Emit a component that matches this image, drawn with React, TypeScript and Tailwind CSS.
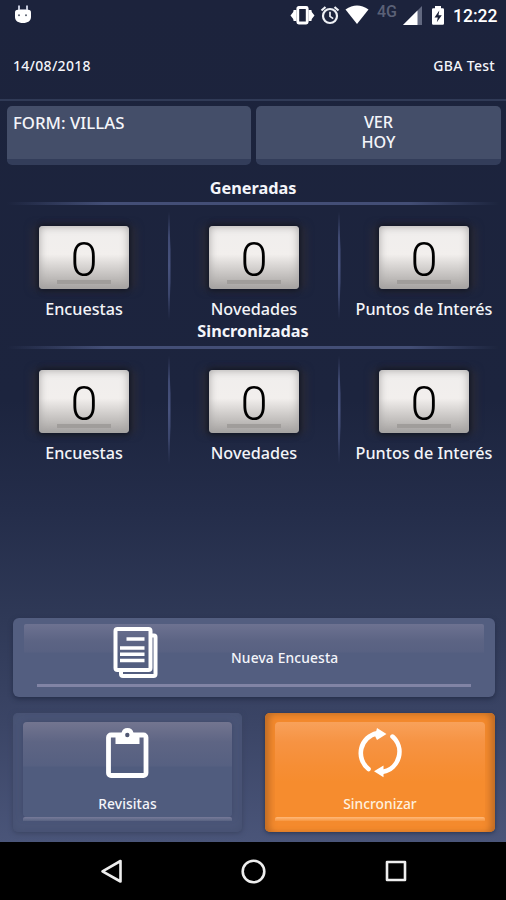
import React from "react";

function StatusBar() {
  return (
    <header className="flex h-8 shrink-0 items-start justify-between pl-[14px] pr-[9px]">
      <svg className="mt-[5px]" width="18" height="19" viewBox="0 0 18 19">
        <path d="M4 0.5h2v4h6v-4h2v5h-10z" fill="#c3c8da" />
        <path d="M1 8a3 3 0 0 1 3-3.2h10A3 3 0 0 1 17 8v4c0 3.7-3 6-8 6s-8-2.3-8-6z" fill="#fff" />
        <circle cx="5" cy="10.3" r="1" fill="#59606f" />
        <circle cx="12" cy="10.3" r="1" fill="#59606f" />
      </svg>
      <div className="flex items-start">
        <svg className="mt-[5px]" width="25" height="20" viewBox="0 0 25 20">
          <path d="M0.5 10.5 4 6v9zM24.500 10.500 21 6v9z" fill="#fff" />
          <path d="M5 5v11M20 5v11" stroke="#fff" strokeWidth="3" />
          <rect x="7.800" y="2.500" width="9.400" height="15.500" rx="1" fill="#1b2138" stroke="#fff" strokeWidth="2.800" />
        </svg>
        <svg className="ml-[5px] mt-[5px]" width="20" height="20" viewBox="0 0 20 20" fill="none" stroke="#eef0f5" strokeWidth="2.2">
          <circle cx="10" cy="11" r="7" />
          <path d="M1.500 5.500 5.500 2M18.500 5.500 14.500 2" />
          <path d="M10 6.800V11.400L13.200 13.600" strokeWidth="1.700" />
        </svg>
        <svg className="ml-[5px] mt-[5px]" width="24" height="20" viewBox="0 0 24 20">
          <path d="M0.500 4.500Q12-3.500 23.500 4.500L12 19z" fill="#fff" />
        </svg>
        <span className="ml-[8px] mt-[2px] w-[22px] font-['Roboto',sans-serif] text-[16px] font-medium leading-[20px] text-[#5b6177]">4G</span>
        <svg className="ml-[4px] mt-[6px]" width="20" height="20" viewBox="0 0 20 20">
          <path d="M19 0v19H0z" fill="#626980" />
          <path d="M14.500 4.500V19H0z" fill="#fff" />
        </svg>
        <svg className="ml-[8px] mt-[6px]" width="14" height="19" viewBox="0 0 14 19">
          <path d="M4 0h6v2.300h1.800q1.200 0 1.200 1.200v14q0 1.300-1.200 1.300H2.200Q1 18.800 1 17.500v-14q0-1.200 1.200-1.200H4z" fill="#fff" />
          <path d="M8.300 4.500 3.500 11.500h3.300L5.800 16.300l5-7H7.500z" fill="#1b2138" />
        </svg>
        <span className="ml-[8px] mt-[5px] w-[44px] whitespace-nowrap font-['Roboto',sans-serif] text-[17.500px] font-medium leading-[22px] text-white">12:22</span>
      </div>
    </header>
  );
}

function Rule() {
  return (
    <div className="mx-[7px] h-[3px] bg-linear-to-r from-[#2a345300] from-0% via-[#434e76] via-20% to-[#434e76] to-80%">
      <div className="ml-auto h-[3px] w-[90px] bg-linear-to-r from-[#434e76] to-[#1c243d]" />
    </div>
  );
}

function Counter({ label }: { label: string }) {
  return (
    <div className="flex w-[170px] flex-col items-center pt-[14px]">
      <div className="flex h-[63px] w-[90px] items-center justify-center rounded-[4px] bg-linear-to-b from-[#f0eeed] via-[#f2efed] via-45% to-[#a7a4a2] shadow-[0_0_5px_2px_#101626,6px_0_8px_0px_#302e38,-6px_0_8px_0px_#302e38,inset_0_0_9px_0px_#a5a3a3]">
        <div className="relative flex h-full w-[54px] items-center justify-center">
          <span className="absolute inset-x-0 bottom-[5px] h-[4px] bg-[#a09d9b]" />
          <span className="relative top-[2px] font-['Roboto',sans-serif] text-[49px] font-light leading-[63px] text-black">0</span>
        </div>
      </div>
      <span className="mt-[9px] whitespace-nowrap font-['Noto_Sans',sans-serif] text-[16.200px] font-medium leading-[22px] text-[#f3f4f8]">{label}</span>
    </div>
  );
}

function Divider() {
  return <div className="-mx-[1.500px] h-[108px] w-[3px] shrink-0 bg-linear-to-b from-[#39436a] via-[#48537e] to-[#303a5d] [clip-path:polygon(50%_0,100%_35%,100%_65%,50%_100%,0_65%,0_35%)]" />;
}

function Counters() {
  return (
    <div className="-ml-px flex h-[117px] w-[511px] pt-[7px]">
      <Counter label="Encuestas" />
      <Divider />
      <Counter label="Novedades" />
      <Divider />
      <Counter label="Puntos de Interés" />
    </div>
  );
}

export default function App() {
  return (
    <main className="flex h-[900px] w-[506px] flex-col overflow-hidden bg-black font-['Noto_Sans',sans-serif] text-[#f4f5fa]">
      <div className="flex h-[842px] shrink-0 flex-col bg-[linear-gradient(to_bottom,#1c233c_0px,#1c243e_400px,#242d4a_510px,#2f3957_620px,#3b4566_725px,#4a5579_842px)]">
        <StatusBar />
        <div className="flex h-[67px] shrink-0 items-center justify-between pl-[13px] pr-[11px] text-[14px] font-medium leading-5 tracking-[0.300px]">
          <span>14/08/2018</span>
          <span>GBA Test</span>
        </div>
        <div className="h-[2px] shrink-0 bg-[#303a56]" />
        <div className="flex shrink-0 gap-[5px] pl-[7px] pr-[5px] pt-[5px]">
          <button className="flex h-[59px] w-[244px] shrink-0 rounded-[5px] border-b-[6px] border-[#333d5a] bg-[#444e69] pl-[6px] pt-[7px] text-left text-[16.800px] font-medium leading-5">FORM: VILLAS</button>
          <button className="flex h-[59px] w-[245px] shrink-0 justify-center rounded-[5px] border-b-[6px] border-[#333d5a] bg-[#444e69] pt-[7px] text-center text-[16.200px] font-medium leading-[19.500px]">
            <span>VER<br />HOY</span>
          </button>
        </div>
        <section className="flex flex-col pt-[11px]">
          <h2 className="h-[26px] text-center text-[16.300px] font-bold leading-6">Generadas</h2>
          <Rule />
          <Counters />
        </section>
        <section className="flex flex-col">
          <h2 className="h-[24px] text-center text-[16.300px] font-bold leading-[19px]">Sincronizadas</h2>
          <Rule />
          <Counters />
        </section>
        <button className="ml-[13px] mr-[11px] mt-auto flex h-[79px] shrink-0 flex-col rounded-[6px] bg-[#535e80] pt-[6px] shadow-[0_2px_5px_#252e49]">
          <div className="mx-[11px] flex h-[59px] items-start self-stretch rounded-[2px] bg-[linear-gradient(to_bottom,#6d7291_0,#5c6484_17px,#586182_28px,#535e80_29px)]">
            <svg className="ml-[89px] mt-[3px]" width="45" height="52" viewBox="0 0 45 52" fill="none" stroke="#fff">
              <rect x="2.500" y="2" width="35" height="41" rx="2" strokeWidth="4" />
              <path d="M37.500 8.500h3.500q1.500 0 1.500 1.500v37q0 2-2 2H10q-2 0-2-2v-4" strokeWidth="4" />
              <path d="M13.500 12h18M7 21H31.500M7 27.300H31.500M7 33.500H31.500" strokeWidth="3.600" />
            </svg>
            <span className="ml-[73px] mt-[24px] text-[13.800px] font-medium leading-5 tracking-[0.150px]">Nueva Encuesta</span>
          </div>
          <span className="mx-6 mt-[1px] h-[3px] self-stretch bg-[#8184a5]" />
        </button>
        <div className="mb-[10px] mt-4 flex h-[119px] shrink-0 justify-between pl-[13px] pr-[11px]">
          <button className="flex w-[229px] flex-col rounded-[5px] bg-[#4b5678] px-[10px] pt-[9px] shadow-[0_1px_5px_#39435f,inset_0_0_8px_1px_#465071]">
            <div className="flex h-[95px] flex-col items-center self-stretch rounded-[4px] bg-[linear-gradient(to_bottom,#737590_0,#5e6584_20px,#566081_44px,#505c7e_45px)] shadow-[0_0_6px_#3e4868]">
              <svg className="mt-[5px]" width="43" height="52" viewBox="0 0 43 52">
                <rect x="2.500" y="8" width="37.500" height="40.500" rx="2.500" fill="none" stroke="#fff" strokeWidth="4.800" />
                <path d="M9.500 17V6h6q1-5 6-5t6 5h6v11z" fill="#fff" />
                <circle cx="21.300" cy="8" r="2.200" fill="#515872" />
              </svg>
              <span className="mt-[15px] text-[13.800px] font-medium leading-5 tracking-[0.100px]">Revisitas</span>
            </div>
            <span className="h-[4px] self-stretch rounded-t-[2px] bg-linear-to-b from-[#777a99] to-[#596382]" />
          </button>
          <button className="flex w-[230px] flex-col rounded-[5px] bg-[#f48a2d] px-[10px] pt-[9px] shadow-[0_1px_4px_#27334e,inset_7px_0_7px_-3px_#bd6b25,inset_-7px_0_7px_-3px_#bd6b25,inset_0_4px_7px_-2px_#d87c2a]">
            <div className="flex h-[95px] flex-col items-center self-stretch rounded-[4px] bg-[linear-gradient(to_bottom,#f8a15a_0,#f69343_20px,#f68e35_44px,#f68c2e_60px)]">
              <svg className="mt-[6px]" width="46" height="50" viewBox="0 0 46 50">
                <g fill="none" stroke="#fff" strokeWidth="4.600" strokeLinecap="round">
                  <path d="M20 5.200A20.300 20.300 0 0 0 11.500 41" />
                  <path d="M35.500 8.600A20.300 20.300 0 0 1 26 43.800" />
                </g>
                <path d="M20 0 29.500 6 20 12l-2-4zM26.500 37.500v11.800L17 43.300z" fill="#fff" />
              </svg>
              <span className="mt-[16px] text-[13.800px] font-medium leading-5 text-[#fff1df]">Sincronizar</span>
            </div>
            <span className="h-[4px] self-stretch rounded-t-[2px] bg-linear-to-b from-[#ffb878] to-[#f7963e]" />
          </button>
        </div>
      </div>
      <nav className="flex h-[58px] shrink-0 items-center pl-[100px]">
        <svg width="24" height="26" viewBox="0 0 24 26" fill="none" stroke="#eee" strokeWidth="2.600" strokeLinejoin="round">
          <path d="M20.500 3v20.500L2.500 13.300z" />
        </svg>
        <svg className="ml-[116px]" width="27" height="27" viewBox="0 0 27 27" fill="none" stroke="#eee" strokeWidth="2.600">
          <circle cx="13.500" cy="13.500" r="10.800" />
        </svg>
        <svg className="ml-[118px]" width="22" height="22" viewBox="0 0 22 22" fill="none" stroke="#eee" strokeWidth="2.600" strokeLinejoin="round">
          <rect x="2" y="2" width="18" height="18" />
        </svg>
      </nav>
    </main>
  );
}
